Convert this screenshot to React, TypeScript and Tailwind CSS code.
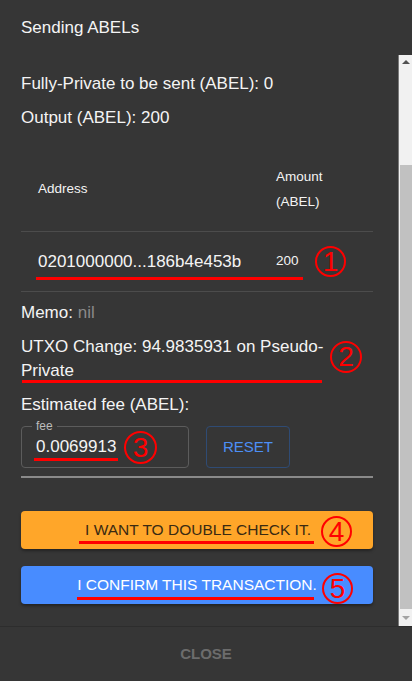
const Mark = ({ n, className }: { n: string; className: string }) => (
  <div
    className={`absolute flex items-center justify-center rounded-full border-2 border-[#ff0000] text-[#ff0000] text-[28px] leading-none ${className}`}
  >
    {n}
  </div>
);

const Line = ({ className }: { className: string }) => (
  <div className={`absolute h-[3px] bg-[#ff0000] ${className}`} />
);

export default function App() {
  return (
    <div
      className="relative w-[412px] h-[681px] bg-[#363636] text-[#f4f4f4] flex flex-col overflow-hidden"
      style={{ fontFamily: '"Liberation Sans", Arial, sans-serif' }}
    >
      {/* title */}
      <div className="h-[55px] px-[21px] flex items-center text-[17px]">Sending ABELs</div>

      {/* scroll body */}
      <div className="h-[572px] flex border-b border-[#2d2d2d]">
        <div className="w-[398px] pl-[21px] pr-[25px] pt-[12px] flex flex-col text-[17px]">
          <div className="h-[34px] leading-[34px]">Fully-Private to be sent (ABEL): 0</div>
          <div className="h-[34px] leading-[34px]">Output (ABEL): 200</div>

          {/* table */}
          <div className="mt-[16px] grid grid-cols-[239px_1fr] text-[13.5px]">
            <div className="h-[81px] pb-[3px] pl-[17px] flex items-center border-b border-[#4c4c4c]">Address</div>
            <div className="h-[81px] pb-[5px] pl-[16px] flex items-center border-b border-[#4c4c4c] leading-[25px]">
              Amount
              <br />
              (ABEL)
            </div>
            <div className="h-[60px] pl-[17px] flex items-center border-b border-[#4c4c4c] text-[17px]">
              0201000000...186b4e453b
            </div>
            <div className="h-[60px] pl-[16px] flex items-center border-b border-[#4c4c4c]">200</div>
          </div>

          <div className="mt-[9px] leading-[24px]">
            Memo: <span className="text-[#8a8a8a]">nil</span>
          </div>
          <div className="mt-[10px] leading-[24px]">UTXO Change: 94.9835931 on Pseudo-Private</div>
          <div className="mt-[10px] leading-[24px]">Estimated fee (ABEL):</div>

          <div className="mt-[9px] flex gap-[17px]">
            <div className="relative w-[168px] h-[42px] rounded-[4px] border border-[#5c5c5c] flex items-center pl-[14px]">
              <span className="absolute left-[10px] top-[-8px] px-[4px] bg-[#363636] text-[12px] leading-[14px] text-[#bdbdbd]">
                fee
              </span>
              0.0069913
            </div>
            <div className="w-[84px] h-[42px] rounded-[4px] border border-[#2f4b74] flex items-center justify-center text-[15px] text-[#4d8ff5]">
              RESET
            </div>
          </div>

          <div className="mt-[8px] h-[2px] bg-[#8a8a8a]" />

          <div className="mt-[33px] h-[38px] rounded-[4px] bg-[#ffa629] shadow-[0_2px_3px_rgba(0,0,0,0.35)] flex items-center justify-center text-[15.5px] text-[#3a2a12] pl-[2px]">
            I WANT TO DOUBLE CHECK IT.
          </div>
          <div className="mt-[17px] h-[38px] rounded-[4px] bg-[#488cff] shadow-[0_2px_3px_rgba(0,0,0,0.35)] flex items-center justify-center text-[15.5px] text-white">
            I CONFIRM THIS TRANSACTION.
          </div>
        </div>

        {/* scrollbar */}
        <div className="w-[14px] bg-[#f1f1f1] border-l border-[#7a7a7a] flex flex-col items-center">
          <div className="h-[14px] flex items-center justify-center">
            <div className="w-0 h-0 border-l-[4px] border-r-[4px] border-b-[4px] border-l-transparent border-r-transparent border-b-[#505050]" />
          </div>
          <div className="mt-[96px] w-[12px] h-[444px] bg-[#c1c1c1]" />
          <div className="flex-1 flex items-center justify-center">
            <div className="w-0 h-0 border-l-[4px] border-r-[4px] border-t-[4px] border-l-transparent border-r-transparent border-t-[#a3a3a3]" />
          </div>
        </div>
      </div>

      {/* actions */}
      <div className="flex-1 flex items-center justify-center text-[15px] font-bold text-[#6c6c6c]">
        CLOSE
      </div>

      {/* annotations */}
      <Line className="left-[36px] w-[267px] top-[277px]" />
      <Mark n="1" className="left-[315px] top-[246px] w-[31px] h-[31px]" />
      <Line className="left-[22px] w-[300px] top-[380px]" />
      <Mark n="2" className="left-[330px] top-[341px] w-[32px] h-[32px]" />
      <Line className="left-[34px] w-[84px] top-[458px]" />
      <Mark n="3" className="left-[124px] top-[431px] w-[33px] h-[33px]" />
      <Line className="left-[79px] w-[235px] top-[541px]" />
      <Mark n="4" className="left-[321px] top-[516px] w-[31px] h-[31px]" />
      <Line className="left-[77px] w-[237px] top-[597px]" />
      <Mark n="5" className="left-[322px] top-[573px] w-[31px] h-[31px]" />
    </div>
  );
}
